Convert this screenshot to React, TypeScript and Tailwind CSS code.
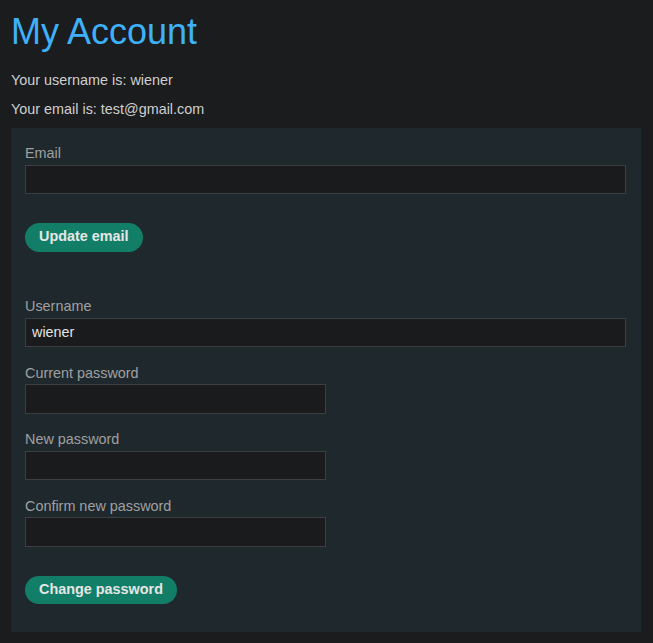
export default function App() {
  const inputCls =
    'block h-[29.5px] border border-[#3b3f42] bg-[#1a1b1d] px-[6px] text-[14.4px] text-[#e3e3e3] outline-none';

  return (
    <div className="min-h-[643px] bg-[#1b1c1e] px-[11px] font-['Liberation_Sans',Arial,sans-serif]">
      <h1 className="pt-[11px] text-[36px] leading-[41px] text-[#3fb0fa]">My Account</h1>

      <p className="mt-[20px] text-[14.4px] leading-[16px] text-[#cfcfcf]">Your username is: wiener</p>
      <p className="mt-[13px] text-[14.4px] leading-[16px] text-[#cfcfcf]">Your email is: test@gmail.com</p>

      <div className="mt-[11px] w-[630px] bg-[#1e282d] px-[14px] pt-[17px] pb-[28px]">
        {/* email form */}
        <form onSubmit={(e) => e.preventDefault()}>
          <label className="mb-[3.5px] block text-[14.4px] leading-[16px] text-[#a0a0a0]">Email</label>
          <input type="email" className={`${inputCls} w-[601px]`} />
          <button className="mt-[29px] h-[28.5px] rounded-full bg-[#137e67] px-[14px] text-[14.4px] font-bold text-[#e6e6e6]">
            Update email
          </button>
        </form>

        {/* password form */}
        <form onSubmit={(e) => e.preventDefault()} className="mt-[46.5px]">
          <label className="mb-[3.5px] block text-[14.4px] leading-[16px] text-[#a0a0a0]">Username</label>
          <input type="text" defaultValue="wiener" className={`${inputCls} w-[601px]`} />

          <label className="mt-[17.5px] mb-[3.5px] block text-[14.4px] leading-[16px] text-[#a0a0a0]">
            Current password
          </label>
          <input type="password" className={`${inputCls} w-[301px]`} />

          <label className="mt-[17.5px] mb-[3.5px] block text-[14.4px] leading-[16px] text-[#a0a0a0]">
            New password
          </label>
          <input type="password" className={`${inputCls} w-[301px]`} />

          <label className="mt-[17.5px] mb-[3.5px] block text-[14.4px] leading-[16px] text-[#a0a0a0]">
            Confirm new password
          </label>
          <input type="password" className={`${inputCls} w-[301px]`} />

          <button className="mt-[29px] h-[28.5px] rounded-full bg-[#137e67] px-[14px] text-[14.4px] font-bold text-[#e6e6e6]">
            Change password
          </button>
        </form>
      </div>
    </div>
  );
}
